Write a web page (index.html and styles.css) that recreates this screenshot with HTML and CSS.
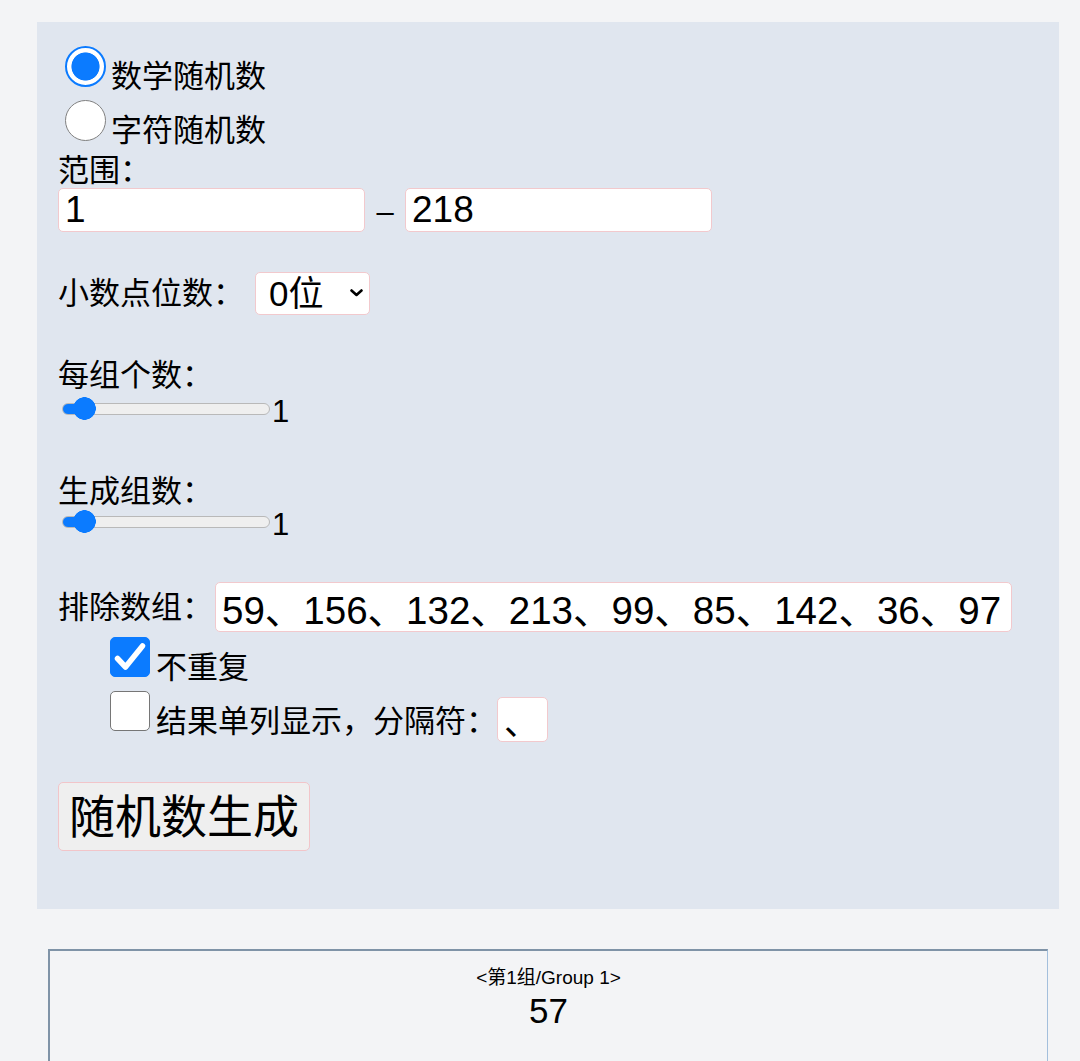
FILE: index.html
```html
<!DOCTYPE html>
<html lang="zh">
<head>
<meta charset="utf-8">
<title>随机数生成</title>
<link rel="stylesheet" href="styles.css">
</head>
<body>
<div class="panel">
  <label class="radio-row"><input type="radio" name="mode" class="radio" checked><span class="opt">数学随机数</span></label>
  <label class="radio-row second"><input type="radio" name="mode" class="radio"><span class="opt">字符随机数</span></label>
  <div class="label">范围：</div>
  <div class="range-row">
    <input class="field range-field" type="text" value="1">
    <span class="dash">–</span>
    <input class="field range-field" type="text" value="218">
  </div>
  <div class="decimal-row">
    <span class="label">小数点位数：</span>
    <div class="select-wrap">
      <select class="select"><option>0位</option><option>1位</option><option>2位</option></select>
      <svg class="chev" width="13" height="8" viewBox="0 0 13 8"><path d="M1.5 1.5 L6.5 6 L11.5 1.5" fill="none" stroke="#000" stroke-width="2.6" stroke-linecap="round" stroke-linejoin="round"/></svg>
    </div>
  </div>
  <div class="label slider-label">每组个数：</div>
  <div class="slider-row"><input type="range" class="slider" min="1" max="100" value="1"><span class="slider-val">1</span></div>
  <div class="label slider-label second">生成组数：</div>
  <div class="slider-row second"><input type="range" class="slider" min="1" max="100" value="1"><span class="slider-val">1</span></div>
  <div class="exclude-row">
    <span class="label">排除数组：</span>
    <input class="field exclude" type="text" value="59、156、132、213、99、85、142、36、97">
  </div>
  <label class="check-row">
    <span class="box"><input type="checkbox" class="check" checked><svg class="tick" width="40" height="40" viewBox="0 0 40 40"><path d="M7.5 21.5 L15.5 30 L32.5 9" fill="none" stroke="#fff" stroke-width="5.5" stroke-linecap="round" stroke-linejoin="round"/></svg></span>
    <span class="opt">不重复</span>
  </label>
  <div class="check-row second">
    <span class="box"><input type="checkbox" class="check"></span>
    <span class="opt">结果单列显示，分隔符：</span>
    <input class="field sep" type="text" value="、">
  </div>
  <button class="gen" type="button">随机数生成</button>
</div>
<div class="result">
  <div class="group">&lt;第1组/Group 1&gt;</div>
  <div class="value">57</div>
</div>
</body>
</html>
```
FILE: styles.css
```css
* { box-sizing: border-box; }
html, body { margin: 0; }
body {
  padding: 22px 21px 0 37px;
  background: #f3f4f6;
  font-family: "Liberation Sans", "Noto Sans CJK SC", sans-serif;
  color: #000;
}
.panel {
  background: #e0e6ef;
  padding: 24px 21px 58px 21px;
}
.radio-row { display: flex; align-items: flex-start; height: 54px; }
.radio-row.second { height: 55px; }
.radio {
  appearance: none;
  -webkit-appearance: none;
  width: 41px; height: 41px;
  margin: 0 5px 0 7px;
  border-radius: 50%;
  border: 1.5px solid #808080;
  background: #fff;
  flex: none;
}
.radio:checked {
  border: 2px solid #0b7bff;
  background: radial-gradient(circle closest-side, #0b7bff 0 74%, #fff 78%);
}
.opt { font-size: 31px; line-height: 31px; margin-top: 15px; white-space: nowrap; }
.label { font-size: 31px; line-height: 31px; white-space: nowrap; }
.field {
  height: 44px;
  border: 1px solid #f2c9cd;
  border-radius: 5px;
  background: #fff;
  font-family: "Liberation Sans", "Noto Sans CJK SC", sans-serif;
  font-size: 37px;
  padding: 0 6px;
  color: #000;
  outline: none;
}
.range-row { display: flex; align-items: center; margin-top: 2px; }
.range-field { width: 307px; }
.dash { width: 40px; text-align: center; font-size: 31px; padding-top: 3px; }
.decimal-row { display: flex; align-items: center; margin-top: 40px; }
.select-wrap { position: relative; margin-left: 11px; height: 43px; }
.select {
  appearance: none;
  -webkit-appearance: none;
  width: 115px; height: 43px;
  border: 1px solid #f2c9cd;
  border-radius: 5px;
  background: #fff;
  font-family: "Liberation Sans", "Noto Sans CJK SC", sans-serif;
  font-size: 35px;
  padding: 0 0 0 13px;
  color: #000;
  outline: none;
}
.chev { position: absolute; left: 95px; top: 17px; pointer-events: none; }
.slider-label { margin-top: 45px; }
.slider-label.second { margin-top: 49px; }
.slider-row { display: flex; align-items: flex-start; margin-top: 5px; height: 31px; }
.slider-row.second { margin-top: 2px; }
.slider {
  -webkit-appearance: none;
  appearance: none;
  width: 208px; height: 23px;
  margin: 1px 2px 0 4px;
  background: transparent;
}
.slider::-webkit-slider-runnable-track {
  box-sizing: border-box;
  height: 12px;
  border: 1px solid #b9b9b9;
  border-radius: 6px;
  background: linear-gradient(to right, #0b7bff 21px, #efefef 21px);
}
.slider::-webkit-slider-thumb {
  -webkit-appearance: none;
  width: 43px; height: 23px;
  margin-top: -6.5px;
  border: none;
  background: radial-gradient(circle 11.5px at 50% 50%, #0b7bff 96%, transparent 100%);
}
.slider-val { font-size: 31px; line-height: 31px; }
.exclude-row { display: flex; align-items: center; margin-top: 42px; }
.exclude { width: 797px; height: 50px; margin-left: 2px; font-size: 38.5px; padding: 0 1px 0 6px; }
.check-row { display: flex; align-items: flex-start; margin-left: 52px; margin-top: 5px; height: 54px; }
.check-row.second { margin-top: 0; height: 51px; }
.box { position: relative; width: 40px; height: 40px; margin-right: 6px; flex: none; }
.check {
  appearance: none;
  -webkit-appearance: none;
  display: block;
  width: 40px; height: 40px;
  margin: 0;
  border-radius: 5px;
  border: 1.5px solid #767676;
  background: #fff;
}
.check:checked { background: #0b7bff; border-color: #0b7bff; }
.tick { position: absolute; left: 0; top: 0; pointer-events: none; }
.sep { width: 51px; height: 45px; margin-top: 6px; font-size: 35px; }
.gen {
  display: block;
  margin-top: 40px;
  font-family: "Liberation Sans", "Noto Sans CJK SC", sans-serif;
  font-size: 46px;
  line-height: 46px;
  padding: 11px 10px 10px;
  border: 1px solid #f2c5c9;
  border-radius: 5px;
  background: #efefef;
  color: #000;
}
.result {
  margin: 40px 0 0 11px;
  width: 1000px;
  height: 112px;
  border-top: 2px solid #7f93a7;
  border-left: 2px solid #7f93a7;
  border-right: 1px solid #a3bfdc;
  padding-top: 16px;
  text-align: center;
}
.group { font-size: 19px; line-height: 22px; }
.value { font-size: 35px; line-height: 40px; margin-top: 2px; }
```
